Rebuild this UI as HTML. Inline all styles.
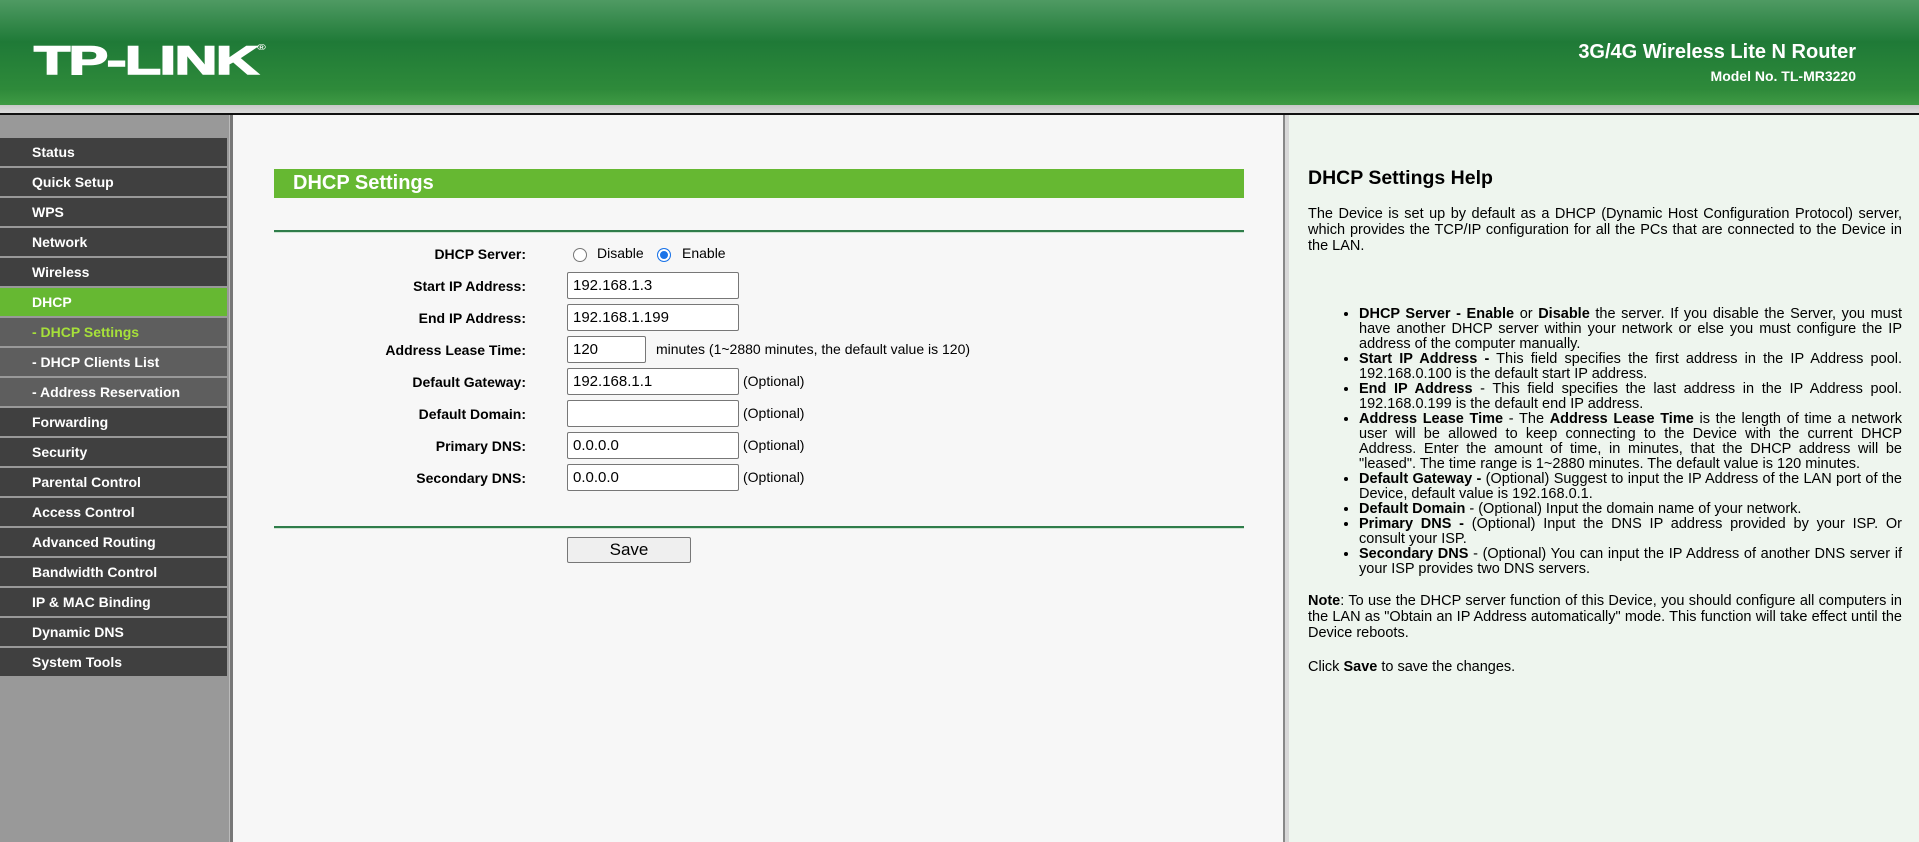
<!DOCTYPE html>
<html><head><meta charset="utf-8"><style>
*{margin:0;padding:0;box-sizing:border-box}
body{width:1919px;height:842px;overflow:hidden;font-family:"Liberation Sans",Arial,sans-serif;background:#f7f7f7;position:relative}
#hdr{position:absolute;left:0;top:0;width:1919px;height:105px;background:linear-gradient(180deg,#4f9a63 0%,#1f7a37 40%,#2e8a3a 85%,#3f9a44 100%)}
#logo{position:absolute;left:34px;top:39px;font-size:40px;font-weight:bold;color:#fff;letter-spacing:-1px;transform:scaleX(1.48);transform-origin:left;-webkit-text-stroke:1.5px #fff}
#logo sup{font-size:8px;vertical-align:top;position:relative;top:4px;-webkit-text-stroke:0}
#t1{position:absolute;right:63px;top:41px;font-size:20px;font-weight:bold;color:#fff}
#t2{position:absolute;right:63px;top:68px;font-size:14px;font-weight:bold;color:#fff}
#band{position:absolute;left:0;top:105px;width:1919px;height:9px;background:linear-gradient(#c8c8c8,#dedede)}
#bline{position:absolute;left:0;top:113px;width:1919px;height:2px;background:#111}
#side{position:absolute;left:0;top:115px;width:229px;height:727px;background:#999}
#sideb{position:absolute;left:229px;top:115px;width:4px;height:727px;background:#777;border-left:1px solid #bbb}
.mi{position:absolute;left:0;width:227px;height:28px;background:#404040;color:#fff;font-weight:bold;font-size:14px;line-height:28px;padding-left:32px}
.mi.sub{background:#5e5e5e}
.mi.act{background:#66b832}
.mi.cur{color:#a6e03a}
#main{position:absolute;left:233px;top:115px;width:1050px;height:727px;background:#f7f7f7}
#sep{position:absolute;left:1283px;top:115px;width:6px;height:727px;background:#d8d8d8;border-left:2px solid #888}
#help{position:absolute;left:1289px;top:115px;width:630px;height:727px;background:#eef5ee}
#bar{position:absolute;left:274px;top:169px;width:970px;height:29px;background:#66b832;color:#fff;font-weight:bold;font-size:20px;line-height:29px;padding-left:19px}
.hl{position:absolute;left:274px;width:970px;height:3px;border-top:2px solid #2f7d4a;border-bottom:1px solid #cfe3d3}
.lab{position:absolute;right:1393px;font-weight:bold;font-size:14px;color:#000;text-align:right;white-space:nowrap}
.inp{position:absolute;left:567px;width:172px;height:27px;border:1px solid #777;background:#fff;font-size:15px;line-height:25px;padding-left:5px;border-radius:2px}
.tx{position:absolute;font-size:14px;color:#000;white-space:nowrap}
.rad{position:absolute;width:14px;height:14px;border-radius:50%;border:1px solid #777;background:#fff}
#save{position:absolute;left:567px;top:537px;width:124px;height:26px;border:1px solid #777;background:#efefef;font-size:17px;text-align:center;line-height:24px;border-radius:2px}
#ht{position:absolute;left:1308px;top:167px;font-size:19.5px;font-weight:bold;color:#000}
.hp{position:absolute;left:1308px;width:594px;font-size:14.5px;line-height:16px;text-align:justify;color:#000}
ul.hp{left:1359px;width:543px;list-style:disc;line-height:15px}
ul.hp li{margin:0}
</style></head><body>
<div id="hdr"><div id="logo">TP-LINK<sup>®</sup></div><div id="t1">3G/4G Wireless Lite N Router</div><div id="t2">Model No. TL-MR3220</div></div>
<div id="band"></div><div id="bline"></div>
<div id="side"></div><div id="sideb"></div>
<div class="mi" style="top:138px">Status</div>
<div class="mi" style="top:168px">Quick Setup</div>
<div class="mi" style="top:198px">WPS</div>
<div class="mi" style="top:228px">Network</div>
<div class="mi" style="top:258px">Wireless</div>
<div class="mi act" style="top:288px">DHCP</div>
<div class="mi sub cur" style="top:318px">- DHCP Settings</div>
<div class="mi sub" style="top:348px">- DHCP Clients List</div>
<div class="mi sub" style="top:378px">- Address Reservation</div>
<div class="mi" style="top:408px">Forwarding</div>
<div class="mi" style="top:438px">Security</div>
<div class="mi" style="top:468px">Parental Control</div>
<div class="mi" style="top:498px">Access Control</div>
<div class="mi" style="top:528px">Advanced Routing</div>
<div class="mi" style="top:558px">Bandwidth Control</div>
<div class="mi" style="top:588px">IP &amp; MAC Binding</div>
<div class="mi" style="top:618px">Dynamic DNS</div>
<div class="mi" style="top:648px">System Tools</div>
<div id="main"></div>
<div id="bar">DHCP Settings</div>
<div class="hl" style="top:230px"></div>
<div class="hl" style="top:526px"></div>
<div class="lab" style="top:246px">DHCP Server:</div>
<div class="rad" style="left:573px;top:248px"></div><div class="tx" style="left:597px;top:245px">Disable</div>
<div class="rad" style="left:657px;top:248px;border-color:#1a73e8;box-shadow:inset 0 0 0 2px #fff;background:#1a73e8"></div><div class="tx" style="left:682px;top:245px">Enable</div>
<div class="lab" style="top:278px">Start IP Address:</div><div class="inp" style="top:272px">192.168.1.3</div>
<div class="lab" style="top:310px">End IP Address:</div><div class="inp" style="top:304px">192.168.1.199</div>
<div class="lab" style="top:342px">Address Lease Time:</div><div class="inp" style="top:336px;width:79px">120</div><div class="tx" style="left:656px;top:341px">minutes (1~2880 minutes, the default value is 120)</div>
<div class="lab" style="top:374px">Default Gateway:</div><div class="inp" style="top:368px">192.168.1.1</div><div class="tx" style="left:743px;top:373px">(Optional)</div>
<div class="lab" style="top:406px">Default Domain:</div><div class="inp" style="top:400px"></div><div class="tx" style="left:743px;top:405px">(Optional)</div>
<div class="lab" style="top:438px">Primary DNS:</div><div class="inp" style="top:432px">0.0.0.0</div><div class="tx" style="left:743px;top:437px">(Optional)</div>
<div class="lab" style="top:470px">Secondary DNS:</div><div class="inp" style="top:464px">0.0.0.0</div><div class="tx" style="left:743px;top:469px">(Optional)</div>
<div id="save">Save</div>
<div id="sep"></div>
<div id="help"></div>
<div id="ht">DHCP Settings Help</div>
<p class="hp" style="top:206px">The Device is set up by default as a DHCP (Dynamic Host Configuration Protocol) server, which provides the TCP/IP configuration for all the PCs that are connected to the Device in the LAN.</p>
<ul class="hp" style="top:307px">
<li><b>DHCP Server - Enable</b> or <b>Disable</b> the server. If you disable the Server, you must have another DHCP server within your network or else you must configure the IP address of the computer manually.</li>
<li><b>Start IP Address -</b> This field specifies the first address in the IP Address pool. 192.168.0.100 is the default start IP address.</li>
<li><b>End IP Address</b> - This field specifies the last address in the IP Address pool. 192.168.0.199 is the default end IP address.</li>
<li><b>Address Lease Time</b> - The <b>Address Lease Time</b> is the length of time a network user will be allowed to keep connecting to the Device with the current DHCP Address. Enter the amount of time, in minutes, that the DHCP address will be "leased". The time range is 1~2880 minutes. The default value is 120 minutes.</li>
<li><b>Default Gateway -</b> (Optional) Suggest to input the IP Address of the LAN port of the Device, default value is 192.168.0.1.</li>
<li><b>Default Domain</b> - (Optional) Input the domain name of your network.</li>
<li><b>Primary DNS -</b> (Optional) Input the DNS IP address provided by your ISP. Or consult your ISP.</li>
<li><b>Secondary DNS</b> - (Optional) You can input the IP Address of another DNS server if your ISP provides two DNS servers.</li>
</ul>
<p class="hp" style="top:593px"><b>Note</b>: To use the DHCP server function of this Device, you should configure all computers in the LAN as "Obtain an IP Address automatically" mode. This function will take effect until the Device reboots.</p>
<p class="hp" style="top:659px">Click <b>Save</b> to save the changes.</p>
</body></html>
